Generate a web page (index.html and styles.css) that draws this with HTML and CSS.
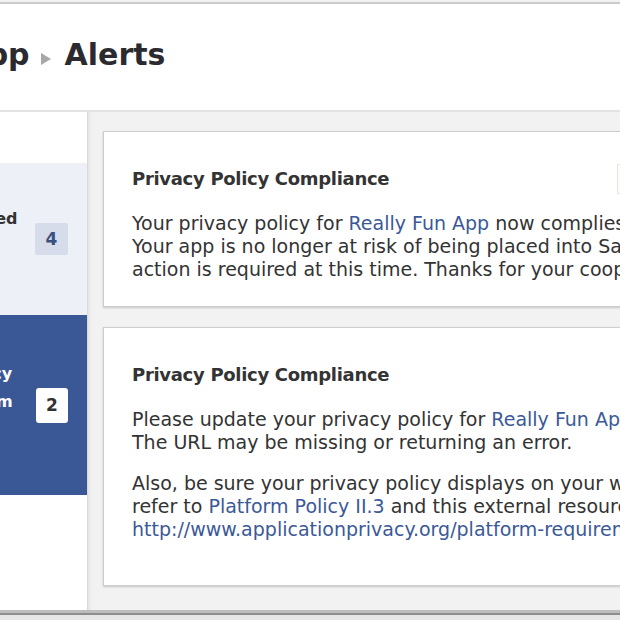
FILE: index.html
```html
<!DOCTYPE html>
<html>
<head>
<meta charset="utf-8">
<title>Alerts</title>
<link rel="stylesheet" href="styles.css">
</head>
<body>
<div class="window">
  <div class="topline"></div>
  <div class="page">
    <header class="header">
      <h1 class="crumbs"><span class="crumb">Really Fun App</span><svg class="crumb-arrow" width="10" height="12" viewBox="0 0 10 12"><path d="M0 0 L10 6 L0 12 Z"/></svg><span class="crumb">Alerts</span></h1>
    </header>
    <div class="body-row">
      <nav class="sidebar">
        <a class="nav-item nav-item--light">
          <span class="nav-label"><span class="line">Policies Resolved</span><span class="line">by Developer</span></span>
          <span class="badge badge--light">4</span>
        </a>
        <a class="nav-item nav-item--active">
          <span class="nav-label"><span class="line">Awaiting Privacy</span><span class="line">Open Items from</span><span class="line">the Developer</span></span>
          <span class="badge badge--active">2</span>
        </a>
      </nav>
      <main class="content">
        <section class="card card--first">
          <div class="card-head">
            <h2 class="card-title">Privacy Policy Compliance</h2>
            <button class="card-btn">Dismiss</button>
          </div>
          <p class="card-text">Your privacy policy for <a class="link">Really Fun App</a> now complies with our policies.<br>Your app is no longer at risk of being placed into Sandbox Mode. No further<br>action is required at this time. Thanks for your cooperation.</p>
        </section>
        <section class="card card--tall">
          <div class="card-head">
            <h2 class="card-title">Privacy Policy Compliance</h2>
          </div>
          <p class="card-text">Please update your privacy policy for <a class="link">Really Fun App</a> so that it is accessible.<br>The URL may be missing or returning an error.</p>
          <p class="card-text card-text--spaced">Also, be sure your privacy policy displays on your website. For more info,<br>refer to <a class="link">Platform Policy II.3</a> and this external resource:<br><a class="link">http://www.applicationprivacy.org/platform-requirements</a></p>
        </section>
      </main>
    </div>
  </div>
  <div class="bottom-edge"></div>
</div>
</body>
</html>
```
FILE: styles.css
```css
html, body {
  margin: 0;
  padding: 0;
  background: #ffffff;
  overflow: hidden;
}

.window {
  width: 620px;
  height: 620px;
  overflow: hidden;
  font-family: "DejaVu Sans", Verdana, sans-serif;
  color: #333333;
}

.topline {
  height: 2px;
  background: #f2f2f2;
  border-bottom: 2px solid #cbcbcb;
}

.page {
  margin-left: -240px;
  width: 860px;
}

.header {
  height: 72px;
  padding: 34px 0 0 17px;
  border-bottom: 2px solid #e2e2e2;
  background: #ffffff;
}

.crumbs {
  margin: 0;
  font-size: 30px;
  line-height: 34px;
  font-weight: bold;
  color: #2b2b2f;
  white-space: nowrap;
}

.crumb-arrow {
  fill: #a8a8a8;
  margin: 0 14px 0 11px;
  vertical-align: baseline;
}

.body-row {
  display: flex;
  height: 498px;
}

.sidebar {
  width: 327px;
  flex: none;
  padding-top: 51px;
  background: #ffffff;
  border-right: 1px solid #d9d9d9;
}

.nav-item {
  display: flex;
  align-items: center;
  padding: 0 19px 0 101px;
  font-size: 16px;
  font-weight: bold;
  line-height: 28px;
}

.nav-item--light {
  height: 152px;
  background: #edf0f6;
  color: #333333;
}

.nav-item--active {
  height: 180px;
  background: #3b5896;
  color: #ffffff;
}

.nav-label {
  flex: 1;
  min-width: 0;
  align-self: stretch;
  padding-top: 42px;
}

.nav-item--active .nav-label {
  padding-top: 45px;
}

.line {
  display: block;
  white-space: nowrap;
}

.badge {
  flex: none;
  display: flex;
  align-items: center;
  justify-content: center;
  font-size: 17px;
  font-weight: bold;
}

.badge--light {
  width: 33px;
  height: 32px;
  background: #d6dce9;
  color: #3b4f80;
  border-radius: 2px;
}

.badge--active {
  width: 32px;
  height: 35px;
  background: #ffffff;
  color: #333333;
  border-radius: 3px;
}

.content {
  flex: 1;
  background: #f2f2f2;
  padding: 19px 0 0 15px;
  box-shadow: inset 4px 0 5px -4px rgba(0, 0, 0, 0.12);
}

.card {
  width: 660px;
  background: #ffffff;
  border: 1px solid #cdcdcd;
  box-shadow: 0 1px 2px rgba(0, 0, 0, 0.18);
  padding: 36px 0 23px 28px;
  margin-bottom: 20px;
}

.card--first {
  padding-bottom: 25px;
}

.card--tall {
  padding-bottom: 44px;
}

.card-head {
  display: grid;
  grid-template-columns: 485px auto;
  align-items: center;
  height: 22px;
  margin-bottom: 22px;
}

.card-title {
  margin: 0;
  font-size: 18px;
  line-height: 22px;
  letter-spacing: -0.3px;
  font-weight: bold;
  color: #333333;
}

.card-btn {
  justify-self: start;
  height: 30px;
  margin: -4px 0;
  padding: 0 12px;
  border: 1px solid #e6e6da;
  background: #fdfdf8;
  font-family: inherit;
  font-size: 15px;
  color: #333333;
}

.card-text {
  margin: 0;
  font-size: 19px;
  line-height: 23px;
  white-space: nowrap;
  color: #333333;
}

.card-text--spaced {
  margin-top: 18px;
}

.link {
  color: #3b5998;
  text-decoration: none;
}

.bottom-edge {
  height: 3px;
  background: #bdbdbd;
  border-bottom: 2px solid #8d8d8d;
  box-shadow: 0 5px 0 #e6e6e6;
}
```
